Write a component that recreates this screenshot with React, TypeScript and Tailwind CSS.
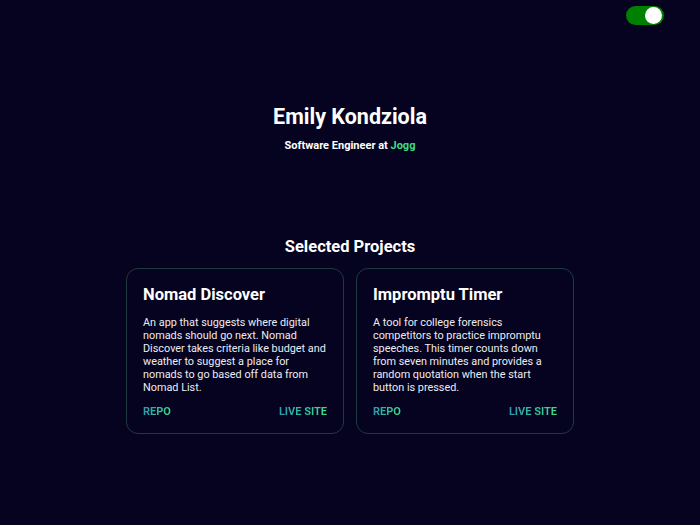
import React, { useState } from 'react';

interface Project {
  title: string;
  description: string;
}

const projects: Project[] = [
  {
    title: 'Nomad Discover',
    description:
      'An app that suggests where digital nomads should go next. Nomad Discover takes criteria like budget and weather to suggest a place for nomads to go based off data from Nomad List.',
  },
  {
    title: 'Impromptu Timer',
    description:
      'A tool for college forensics competitors to practice impromptu speeches. This timer counts down from seven minutes and provides a random quotation when the start button is pressed.',
  },
];

const linkClass =
  'text-[11px] font-bold bg-gradient-to-r from-[#2b9bb0] to-[#3ddc84] bg-clip-text text-transparent';

const ProjectCard: React.FC<{ project: Project }> = ({ project }) => (
  <div className="w-[218px] h-[166px] rounded-xl border border-[#1f3a3f] pl-4 pr-[14px] pt-[15px] flex flex-col">
    <h3 className="text-[16.5px] font-bold text-white leading-[22px]">{project.title}</h3>
    <p className="mt-[10px] text-[10.85px] leading-[13px] text-[#ececf2]">{project.description}</p>
    <div className="flex justify-between mt-[10px] pr-[2px]">
      <a className={linkClass}>REPO</a>
      <a className={linkClass}>LIVE SITE</a>
    </div>
  </div>
);

export default function App() {
  const [on, setOn] = useState(true);

  return (
    <div className="min-h-[525px] w-full bg-[#05031f] text-white font-['Roboto',sans-serif] relative">
      <button
        onClick={() => setOn(!on)}
        className={`absolute top-[6px] right-[36px] w-[38px] h-[19px] rounded-full flex items-center px-[2px] ${
          on ? 'bg-[#008000] justify-end' : 'bg-gray-500 justify-start'
        }`}
      >
        <span className="w-[17px] h-[17px] rounded-full bg-white" />
      </button>

      <div className="pt-[104px] flex flex-col items-center">
        <h1 className="text-[21.5px] font-bold leading-[26px]">Emily Kondziola</h1>
        <p className="mt-[9px] text-[11px] font-bold leading-[14px]">
          Software Engineer at <span className="text-[#3ddc84]">Jogg</span>
        </p>

        <h2 className="mt-[83px] text-[16.5px] font-bold leading-[22px]">Selected Projects</h2>
        <div className="mt-[10px] flex gap-3">
          {projects.map((p) => (
            <ProjectCard key={p.title} project={p} />
          ))}
        </div>
      </div>
    </div>
  );
}
